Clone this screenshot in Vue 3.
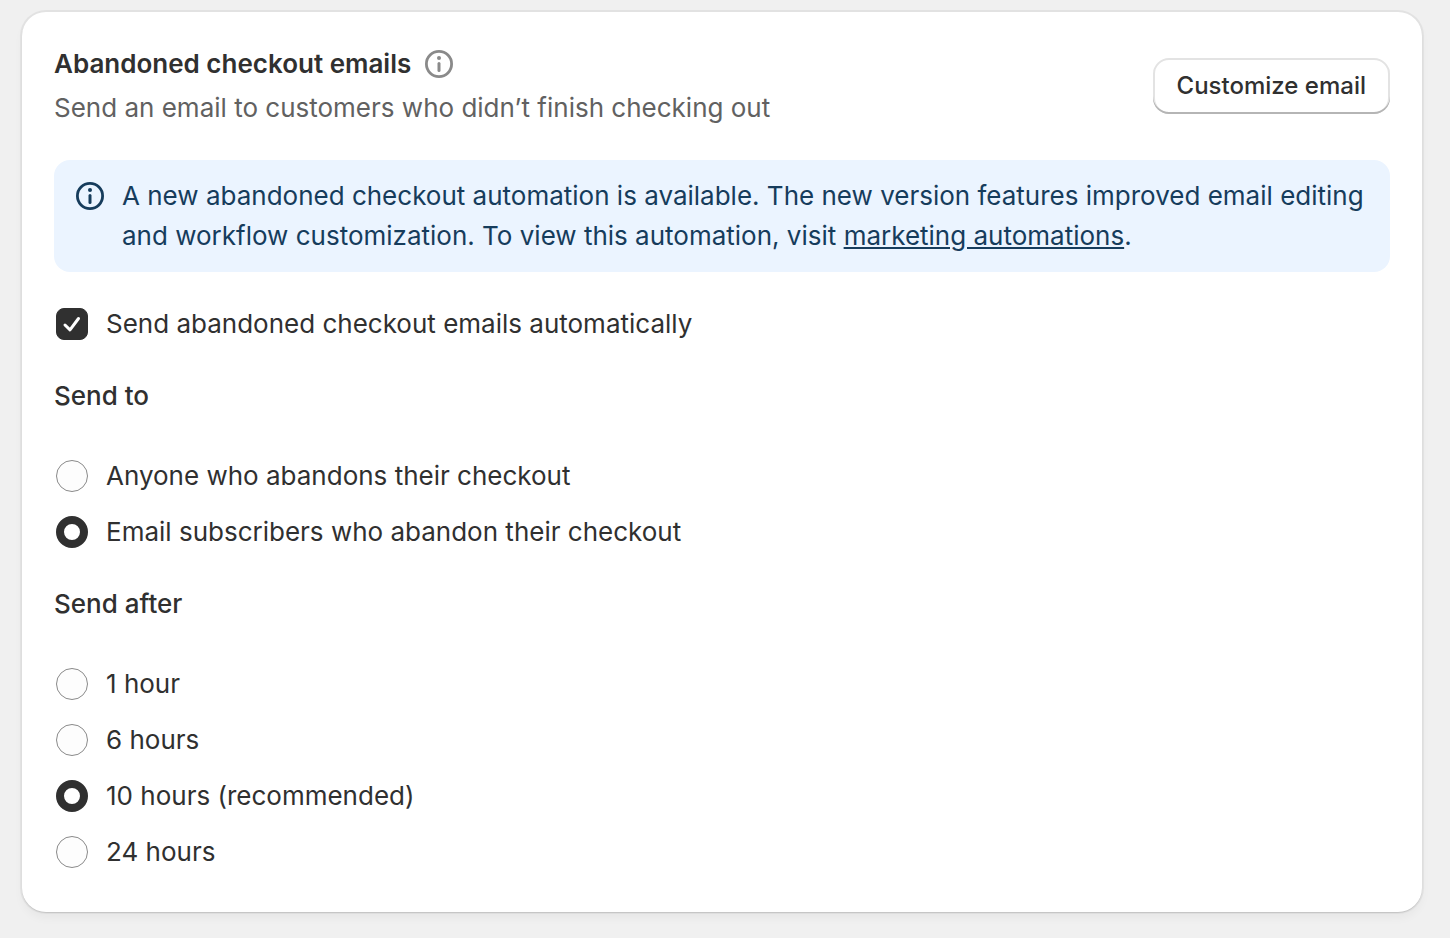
<script setup>
import { ref } from 'vue'

const automatic = ref(true)
const sendTo = ref('subscribers')
const sendAfter = ref('10')
const audiences = [
  { value: 'anyone', label: 'Anyone who abandons their checkout' },
  { value: 'subscribers', label: 'Email subscribers who abandon their checkout' },
]
const delays = [
  { value: '1', label: '1 hour' },
  { value: '6', label: '6 hours' },
  { value: '10', label: '10 hours (recommended)' },
  { value: '24', label: '24 hours' },
]
</script>

<template>
  <main class="card">
    <header class="header">
      <div>
        <h1 class="title">
          Abandoned checkout emails
          <svg class="icon muted" viewBox="0 0 28 28" aria-hidden="true">
            <circle cx="14" cy="14" r="12.6" fill="none" stroke="currentColor" stroke-width="2.8" />
            <circle cx="14" cy="8" r="2" fill="currentColor" />
            <path d="M14 13.500v7" stroke="currentColor" stroke-width="3" stroke-linecap="round" />
          </svg>
        </h1>
        <p class="subtitle">Send an email to customers who didn’t finish checking out</p>
      </div>
      <button class="button" type="button">Customize email</button>
    </header>

    <section class="banner">
      <svg class="icon" viewBox="0 0 28 28" aria-hidden="true">
        <circle cx="14" cy="14" r="12.6" fill="none" stroke="currentColor" stroke-width="2.8" />
        <circle cx="14" cy="8" r="2" fill="currentColor" />
        <path d="M14 13.500v7" stroke="currentColor" stroke-width="3" stroke-linecap="round" />
      </svg>
      <p>
        A new abandoned checkout automation is available. The new version features improved email editing
        and workflow customization. To view this automation, visit <a href="#">marketing automations</a>.
      </p>
    </section>

    <label class="choice">
      <span class="box">
        <input v-model="automatic" type="checkbox" class="control check" />
        <svg v-if="automatic" class="tick" viewBox="0 0 32 32" aria-hidden="true">
          <path d="M9 17l5 4.800L22.500 10.500" fill="none" stroke="#fff" stroke-width="3" stroke-linecap="round" stroke-linejoin="round" />
        </svg>
      </span>
      Send abandoned checkout emails automatically
    </label>

    <fieldset class="group">
      <legend>Send to</legend>
      <label v-for="a in audiences" :key="a.value" class="choice">
        <input v-model="sendTo" type="radio" name="send-to" :value="a.value" class="control radio" />
        {{ a.label }}
      </label>
    </fieldset>

    <fieldset class="group">
      <legend>Send after</legend>
      <label v-for="d in delays" :key="d.value" class="choice">
        <input v-model="sendAfter" type="radio" name="send-after" :value="d.value" class="control radio" />
        {{ d.label }}
      </label>
    </fieldset>
  </main>
</template>

<style>
body {
  background: #f0f0f0;
}
</style>

<style scoped>
.card {
  margin: 12px 28px 26px 22px;
  padding: 32px 32px 40px;
  border-radius: 24px;
  background: #fff;
  color: #303030;
  font: 400 26px/40px Inter, "Liberation Sans", sans-serif;
  box-shadow: 0 1px 1px #c4c4c4, 0 0 0 2px #e2e2e2, 0 6px 10px rgba(0, 0, 0, 0.04);
}
.header {
  display: flex;
  justify-content: space-between;
  align-items: center;
}
.title {
  display: flex;
  align-items: center;
  gap: 14px;
  margin: 0 0 4px;
  font-size: 26px;
  font-weight: 600;
}
.subtitle {
  margin: 0;
  color: #616161;
}
.icon {
  flex: none;
  width: 28px;
  height: 28px;
}
.muted {
  color: #8a8a8a;
}
.button {
  height: 56px;
  padding: 0 24px;
  border: 0;
  border-radius: 16px;
  background: #fff;
  color: #303030;
  font: 500 24px/32px Inter, "Liberation Sans", sans-serif;
  box-shadow: inset 0 -2px 0 #b5b5b5, inset 0 0 0 2px #e3e3e3;
}
.banner {
  display: flex;
  gap: 18px;
  margin: 32px 0;
  padding: 16px 16px 16px 22px;
  border-radius: 16px;
  background: #ebf4ff;
  color: #163c5c;
}
.banner .icon {
  margin-top: 6px;
}
.banner p {
  margin: 0;
}
.banner a {
  color: inherit;
  text-decoration: underline;
}
.choice {
  display: flex;
  align-items: center;
  gap: 18px;
  padding-left: 2px;
}
.control {
  flex: none;
  display: block;
  appearance: none;
  width: 32px;
  height: 32px;
  margin: 0;
  border: 1px solid #8a8a8a;
  background: #fdfdfd;
}
.box {
  position: relative;
}
.check {
  border-radius: 8px;
}
.check:checked {
  border-color: #303030;
  background: #303030;
}
.tick {
  position: absolute;
  inset: 0;
}
.radio {
  border-radius: 50%;
}
.radio:checked {
  border: 8px solid #303030;
  background: #fff;
}
.group {
  display: flex;
  flex-direction: column;
  gap: 16px;
  min-width: 0;
  margin: 32px 0 0;
  padding: 0;
  border: 0;
}
.group legend {
  padding: 0;
  margin-bottom: 40px;
  font-weight: 500;
}
</style>
